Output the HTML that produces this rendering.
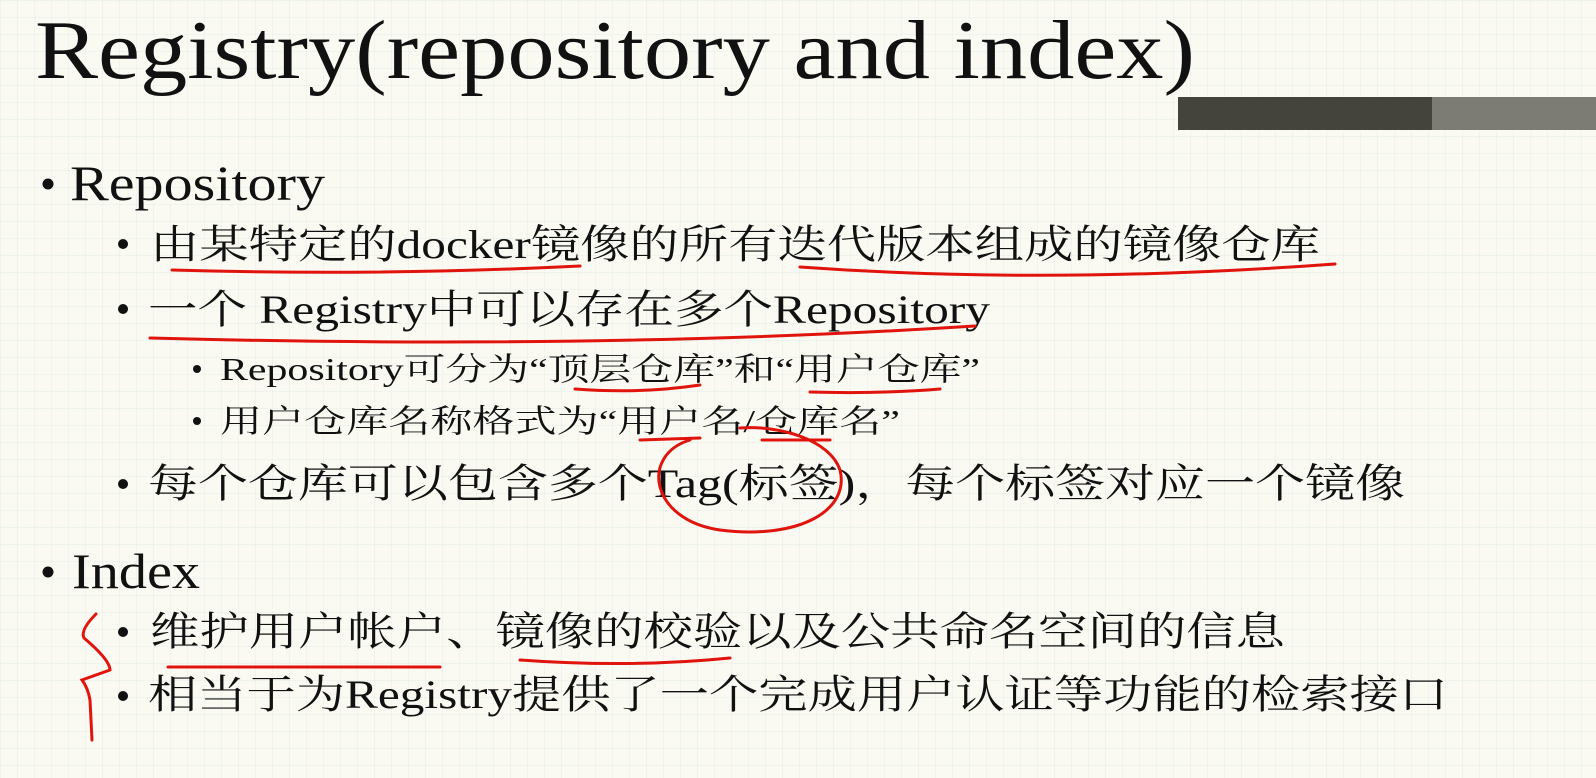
<!DOCTYPE html>
<html><head><meta charset="utf-8"><style>
html,body{margin:0;padding:0;background:#fafaf3;}
body{width:1596px;height:778px;overflow:hidden;position:relative;
background-color:#fafaf3;
background-image:linear-gradient(rgba(170,200,210,.13) 1px,transparent 1px),linear-gradient(90deg,rgba(170,200,210,.13) 1px,transparent 1px);
background-size:17px 17px;}
svg{position:absolute;left:0;top:0}
text{font-family:"Liberation Serif","Noto Serif CJK SC",serif;fill:#111;}
</style></head><body>
<svg width="1596" height="778" viewBox="0 0 1596 778">
<rect x="1178" y="97" width="254" height="33" fill="#45443c"/>
<rect x="1432" y="97" width="164" height="33" fill="#7d7c74"/>
<text x="35" y="78" font-size="84" textLength="1160" lengthAdjust="spacingAndGlyphs">Registry(repository and index)</text>
<g fill="#111">
<circle cx="48" cy="184" r="5.5"/>
<circle cx="123" cy="244" r="5"/>
<circle cx="123" cy="309" r="5"/>
<circle cx="197" cy="369" r="4"/>
<circle cx="197" cy="421" r="4"/>
<circle cx="123" cy="484" r="5"/>
<circle cx="48" cy="572" r="5.5"/>
<circle cx="123" cy="632" r="5"/>
<circle cx="123" cy="696" r="5"/>
</g>
<text x="70" y="200" font-size="50" textLength="255" lengthAdjust="spacingAndGlyphs">Repository</text>
<text x="150" y="258" font-size="40" textLength="1170" lengthAdjust="spacingAndGlyphs">由某特定的docker镜像的所有迭代版本组成的镜像仓库</text>
<text x="148" y="323" font-size="40" textLength="842" lengthAdjust="spacingAndGlyphs">一个 Registry中可以存在多个Repository</text>
<text x="220" y="380" font-size="32" textLength="760" lengthAdjust="spacingAndGlyphs">Repository可分为“顶层仓库”和“用户仓库”</text>
<text x="220" y="432" font-size="32" textLength="680" lengthAdjust="spacingAndGlyphs">用户仓库名称格式为“用户名/仓库名”</text>
<text x="148" y="497" font-size="40" textLength="1257" lengthAdjust="spacingAndGlyphs">每个仓库可以包含多个Tag(标签)，每个标签对应一个镜像</text>
<text x="72" y="588" font-size="50" textLength="128" lengthAdjust="spacingAndGlyphs">Index</text>
<text x="150" y="645" font-size="40" textLength="1135" lengthAdjust="spacingAndGlyphs">维护用户帐户、镜像的校验以及公共命名空间的信息</text>
<text x="148" y="708" font-size="40" textLength="1300" lengthAdjust="spacingAndGlyphs">相当于为Registry提供了一个完成用户认证等功能的检索接口</text>
<g fill="none" stroke="#e0140c" stroke-width="3" stroke-linecap="round">
<path d="M172 270 Q380 276 580 266"/>
<path d="M800 267 Q1050 285 1335 264"/>
<path d="M150 338 Q600 350 975 326"/>
<path d="M575 389 Q640 394 700 385"/>
<path d="M810 392 Q880 394 940 389"/>
<path d="M640 440 L700 438"/>
<path d="M762 440 L830 440"/>
<path d="M690 440 C640 455 650 520 720 530 C800 540 850 510 840 470 C830 440 780 425 740 428"/>
<path d="M168 667 L440 667"/>
<path d="M520 660 Q630 668 730 658"/>
<path d="M96 614 Q80 630 84 638 Q110 660 110 670 L82 680 Q88 688 90 700 L92 740"/>
</g>
</svg>
</body></html>
